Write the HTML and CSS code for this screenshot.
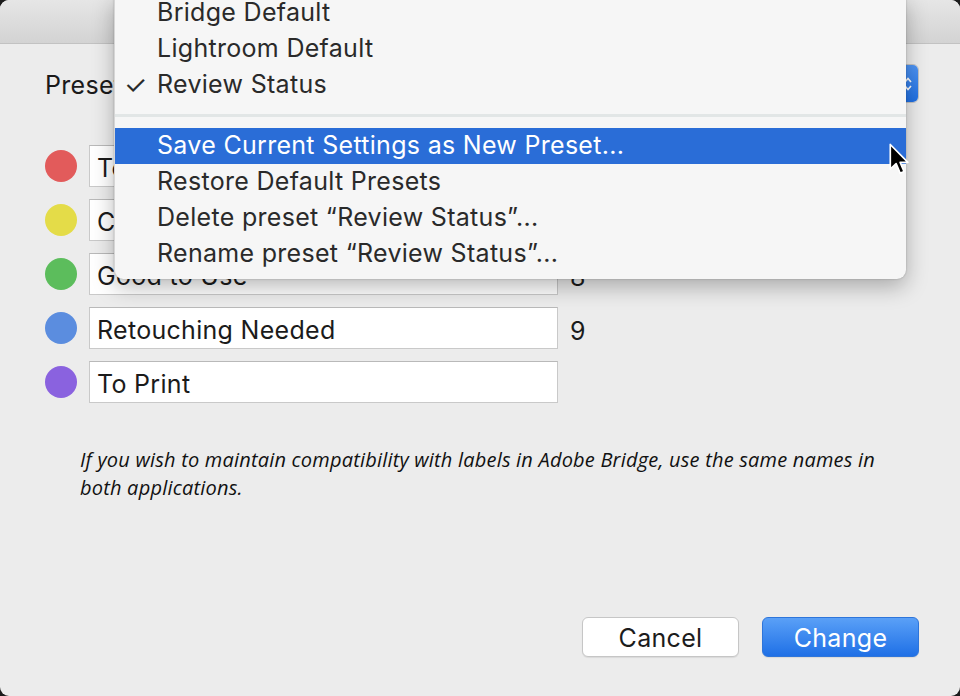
FILE: index.html
```
<!DOCTYPE html>
<html>
<head>
<meta charset="utf-8">
<link rel="stylesheet" href="styles.css">
</head>
<body>
<div class="window">
  <div class="titlebar"></div>
  <div class="content">
    <div class="preset-row">
      <span class="label">Preset:</span>
      <div class="popup">
        <span class="popup-text">Review Status</span>
        <span class="stepper">
          <svg width="10" height="18" viewBox="0 0 10 18"><path d="M2 7 L5 3.5 L8 7" fill="none" stroke="#fff" stroke-width="1.6"/><path d="M2 11 L5 14.5 L8 11" fill="none" stroke="#fff" stroke-width="1.6"/></svg>
        </span>
      </div>
    </div>
    <div class="rows">
      <div class="row"><span class="dot red"></span><div class="field">To Delete</div><span class="num">6</span></div>
      <div class="row"><span class="dot yellow"></span><div class="field">Color Correction Needed</div><span class="num">7</span></div>
      <div class="row"><span class="dot green"></span><div class="field">Good to Use</div><span class="num">8</span></div>
      <div class="row"><span class="dot blue"></span><div class="field">Retouching Needed</div><span class="num">9</span></div>
      <div class="row"><span class="dot purple"></span><div class="field">To Print</div><span class="num"></span></div>
    </div>
    <p class="note">If you wish to maintain compatibility with labels in Adobe Bridge, use the same names in<br>both applications.</p>
    <div class="buttons">
      <button class="btn">Cancel</button>
      <button class="btn primary">Change</button>
    </div>
  </div>

  <div class="menu">
    <div class="item">Bridge Default</div>
    <div class="item">Lightroom Default</div>
    <div class="item"><span class="check">✓</span>Review Status</div>
    <div class="sep"></div>
    <div class="item active">Save Current Settings as New Preset...</div>
    <div class="item">Restore Default Presets</div>
    <div class="item">Delete preset “Review Status”...</div>
    <div class="item">Rename preset “Review Status”...</div>
  </div>

  <svg class="cursor" width="22" height="34" viewBox="0 0 17 26">
    <path d="M1 1 L1 20 L5.5 15.8 L8.6 23.2 L11.6 21.9 L8.6 14.8 L14.6 14.8 Z" fill="#000" stroke="#fff" stroke-width="1.3" stroke-linejoin="round"/>
  </svg>
</div>
</body>
</html>
```
FILE: styles.css
```
* { box-sizing: border-box; }
html, body { margin: 0; padding: 0; }
body {
  background: #1c1c1c;
  width: 960px;
  height: 696px;
  overflow: hidden;
  font-family: Inter, "Liberation Sans", sans-serif;
}
.window {
  position: relative;
  width: 960px;
  height: 696px;
  background: #ececec;
  border-radius: 9px;
  overflow: hidden;
  display: flex;
  flex-direction: column;
}
.titlebar {
  height: 44px;
  flex: none;
  background: linear-gradient(#e6e6e6, #d3d3d3);
  border-bottom: 1px solid #c2c2c2;
}
.content {
  flex: 1;
  display: flex;
  flex-direction: column;
  padding: 20px 41px 39px 45px;
}
.preset-row {
  display: flex;
  align-items: center;
  height: 39px;
}
.label {
  font-size: 25px;
  letter-spacing: 0.3px;
  color: #1a1a1a;
  padding-top: 2px;
}
.popup {
  flex: 1;
  margin-left: 14px;
  height: 39px;
  background: #fff;
  border: 1px solid #c4c4c4;
  border-radius: 6px;
  display: flex;
  align-items: center;
  justify-content: space-between;
  overflow: hidden;
}
.popup-text { font-size: 25px; padding-left: 10px; color: #1a1a1a; }
.stepper {
  width: 22px;
  height: 39px;
  margin: -1px -1px -1px 0;
  background: linear-gradient(#4f95f4, #1f6fe3);
  border-radius: 0 6px 6px 0;
  display: flex;
  align-items: center;
  justify-content: center;
}
.rows {
  margin-top: 42px;
  display: flex;
  flex-direction: column;
  gap: 12px;
}
.row {
  display: flex;
  align-items: center;
  height: 42px;
}
.dot {
  width: 32px;
  height: 32px;
  border-radius: 50%;
  flex: none;
}
.red { background: #e25b5b; }
.yellow { background: #e4dc48; }
.green { background: #5cbd5c; }
.blue { background: #5b8ddf; }
.purple { background: #8a62df; }
.field {
  margin-left: 12px;
  width: 469px;
  height: 42px;
  background: #fff;
  border: 1px solid #c9c9c9;
  border-top-color: #b9b9b9;
  font-size: 25px;
  letter-spacing: 0.3px;
  line-height: 36px;
  padding-top: 4px;
  padding-left: 7px;
  color: #1b1b1b;
}
.num {
  margin-left: 12px;
  font-size: 25px;
  padding-top: 6px;
  color: #1b1b1b;
}
.note {
  margin: 43px 0 0 35px;
  font-family: "Open Sans", sans-serif;
  font-style: italic;
  font-size: 20px;
  line-height: 28px;
  color: #111;
  letter-spacing: 0.2px;
}
.buttons {
  margin-top: auto;
  display: flex;
  justify-content: flex-end;
  gap: 23px;
}
.btn {
  width: 157px;
  height: 40px;
  border-radius: 6px;
  font-family: Inter, "Liberation Sans", sans-serif;
  font-size: 25px;
  letter-spacing: 0.3px;
  background: #fff;
  border: 1px solid #c6c6c6;
  box-shadow: 0 1px 1px rgba(0,0,0,0.08);
  color: #1c1c1c;
  padding: 2px 0 0 0;
}
.btn.primary {
  background: linear-gradient(#5aa0f7, #1f70e6);
  border-color: #2e75da;
  color: #fff;
}
.menu {
  position: absolute;
  left: 114px;
  top: -5px;
  width: 792px;
  padding-bottom: 7px;
  background: #f6f6f6;
  border-left: 1px solid #d6d6d6;
  border-radius: 0 0 9px 9px;
  box-shadow: 0 8px 22px rgba(0,0,0,0.28), 0 0 2px rgba(0,0,0,0.25);
}
.item {
  position: relative;
  height: 36px;
  line-height: 35px;
  padding-left: 42px;
  font-size: 25px;
  letter-spacing: 0.3px;
  color: #2a2a2a;
  white-space: nowrap;
}
.item.active {
  background: #2a6dd7;
  color: #fff;
}
.check {
  position: absolute;
  left: 9px;
  top: 0;
  font-size: 26px;
  color: #2a2a2a;
}
.sep {
  height: 25px;
  position: relative;
}
.sep::after {
  content: "";
  position: absolute;
  left: 0;
  right: 0;
  top: 11px;
  height: 3px;
  background: #e2e6e6;
}
.cursor {
  position: absolute;
  left: 889px;
  top: 143px;
}
```
